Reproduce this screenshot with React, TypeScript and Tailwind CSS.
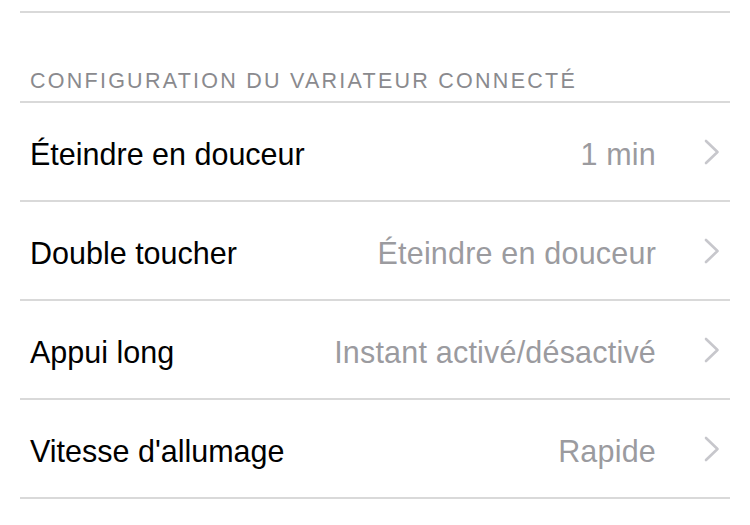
import React from 'react';

const rows = [
  { label: 'Éteindre en douceur', value: '1 min' },
  { label: 'Double toucher', value: 'Éteindre en douceur' },
  { label: 'Appui long', value: 'Instant activé/désactivé' },
  { label: "Vitesse d'allumage", value: 'Rapide' },
];

function Chevron() {
  return (
    <svg width="16" height="26" viewBox="0 0 16 26" fill="none" className="shrink-0">
      <path d="M2 2 L13.5 13 L2 24" stroke="#c7c7cc" strokeWidth="2.6" strokeLinecap="round" strokeLinejoin="round" />
    </svg>
  );
}

export default function App() {
  return (
    <div className="w-[750px] h-[525px] bg-white overflow-hidden pt-[11px]" style={{ fontFamily: '"Liberation Sans", Arial, sans-serif' }}>
      <div className="mx-[20px] h-[2px] bg-[#d9d9d9]" />

      {/* section header */}
      <div className="mx-[20px] h-[88px] flex items-end pl-[10px] pb-[9px]">
        <span className="text-[21.5px] leading-none text-[#8a8a8e] tracking-[2.25px] whitespace-nowrap">CONFIGURATION DU VARIATEUR CONNECTÉ</span>
      </div>
      <div className="mx-[20px] h-[2px] bg-[#d9d9d9]" />

      {rows.map((r) => (
        <div key={r.label}>
          <div className="mx-[20px] h-[97px] flex items-center pl-[10px] pr-[10px]">
            <span className="text-[30.5px] text-black flex-1 pt-[6px]">{r.label}</span>
            <span className="text-[30.5px] text-[#9b9b9f] mr-[48px] pt-[6px] tracking-[0.2px]">{r.value}</span>
            <Chevron />
          </div>
          <div className="mx-[20px] h-[2px] bg-[#d9d9d9]" />
        </div>
      ))}
    </div>
  );
}
